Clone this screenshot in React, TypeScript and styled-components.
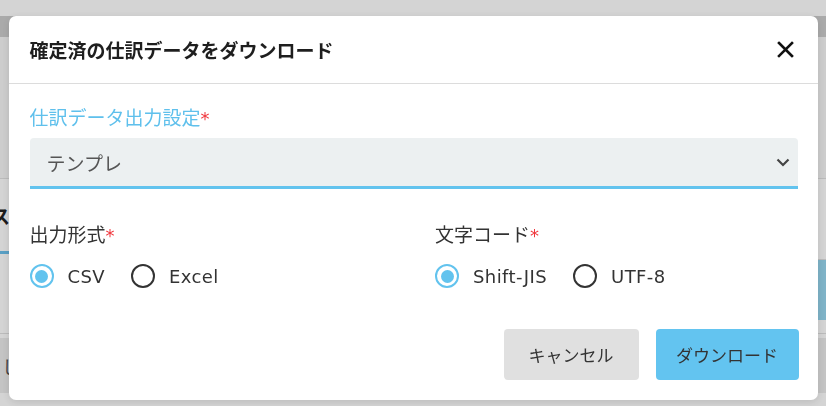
import React, { useState } from 'react';
import styled, { createGlobalStyle } from 'styled-components';

const GlobalStyle = createGlobalStyle`
  html, body {
    margin: 0;
    padding: 0;
    width: 826px;
    height: 406px;
    overflow: hidden;
    font-family: "DejaVu Sans", "Noto Sans CJK JP", sans-serif;
  }
`;

// ---- page behind the dialog ----
const Page = styled.div`
  width: 826px;
  height: 406px;
  background: #ffffff;
  display: flex;
  flex-direction: column;
`;

const TopSpace = styled.div`
  height: 16px;
  background: #ffffff;
`;

const AppBar = styled.div`
  height: 21px;
  background: #cdcdcd;
`;

const Summary = styled.div`
  height: 141px;
  background: #f7f7f7;
  border-bottom: 1px solid #e1e1e1;
`;

const TabRow = styled.div`
  height: 154px;
  display: flex;
  justify-content: space-between;
  border-bottom: 1px solid #e1e1e1;
`;

const Tab = styled.div`
  width: 60px;
  height: 72px;
  display: flex;
  align-items: center;
  justify-content: flex-end;
  font-family: "Noto Sans CJK JP", sans-serif;
  font-weight: 700;
  font-size: 19px;
  color: #222;
  border-bottom: 3px solid #6cc0ec;
  margin-left: -50px;
`;

const SideTools = styled.div`
  width: 40px;
  display: flex;
  flex-direction: column;
`;

const SideButton = styled.div`
  margin-top: 80px;
  height: 60px;
  background: #99d8f1;
  border-top: 1px solid #e1e1e1;
`;

const ListRow = styled.div`
  height: 55px;
  margin-top: 4px;
  background: #ececec;
  display: flex;
  align-items: center;
  font-family: "Noto Sans CJK JP", sans-serif;
  font-size: 18px;
  color: #555;
  padding-left: 2px;
`;

// ---- dialog ----
const Overlay = styled.div`
  position: fixed;
  inset: 0;
  background: rgba(0, 0, 0, 0.17);
  display: flex;
  justify-content: center;
  align-items: flex-start;
  padding-top: 16px;
`;

const Dialog = styled.div`
  width: 809px;
  background: #ffffff;
  border-radius: 7px;
  box-shadow: 0 2px 8px rgba(0, 0, 0, 0.12);
  display: flex;
  flex-direction: column;
`;

const Header = styled.div`
  height: 67px;
  padding: 0 23px 0 21px;
  display: flex;
  align-items: center;
  justify-content: space-between;
  border-bottom: 1px solid #dcdcdc;
`;

const Title = styled.h2`
  margin: 0;
  font-family: "Noto Sans CJK JP", sans-serif;
  font-size: 19px;
  font-weight: 700;
  color: #1e1e1e;
`;

const CloseButton = styled.button`
  width: 18px;
  height: 18px;
  padding: 0;
  border: none;
  background: transparent;
  display: flex;
  align-items: center;
  justify-content: center;
  cursor: pointer;
`;

const Body = styled.div`
  padding: 21px 19px 20px 21px;
  display: flex;
  flex-direction: column;
`;

const Label = styled.div<{ $active?: boolean }>`
  height: 24px;
  line-height: 24px;
  font-family: "Noto Sans CJK JP", sans-serif;
  font-size: 19px;
  color: ${p => (p.$active ? '#5fc0ec' : '#333')};
`;

const Required = styled.span`
  color: #f0363c;
  font-family: "DejaVu Sans", sans-serif;
  font-size: 18px;
`;

const SelectBox = styled.div`
  margin-top: 9px;
  margin-right: 1px;
  height: 48px;
  background: #ecf0f1;
  border-radius: 4px 4px 0 0;
  border-bottom: 3px solid #62c3ee;
  display: flex;
  align-items: center;
  justify-content: space-between;
  padding: 0 8px 0 17px;
`;

const SelectValue = styled.span`
  font-family: "Noto Sans CJK JP", sans-serif;
  font-size: 19px;
  color: #555;
`;

const Columns = styled.div`
  margin-top: 33px;
  display: grid;
  grid-template-columns: 1fr 1fr;
  column-gap: 42px;
`;

const Field = styled.div`
  display: flex;
  flex-direction: column;
`;

const RadioGroup = styled.div`
  margin-top: 15px;
  height: 30px;
  display: flex;
  align-items: center;
  gap: 26px;
`;

const RadioOption = styled.label`
  display: flex;
  align-items: center;
  gap: 14px;
  cursor: pointer;
`;

const RadioCircle = styled.span<{ $checked: boolean }>`
  width: 24px;
  height: 24px;
  box-sizing: border-box;
  border-radius: 50%;
  border: 2px solid ${p => (p.$checked ? '#62c3ee' : '#333')};
  display: flex;
  align-items: center;
  justify-content: center;
  &::after {
    content: '';
    width: 13px;
    height: 13px;
    border-radius: 50%;
    background: ${p => (p.$checked ? '#62c3ee' : 'transparent')};
  }
`;

const RadioText = styled.span`
  font-family: "DejaVu Sans", "Noto Sans CJK JP", sans-serif;
  font-size: 18px;
  letter-spacing: 0.4px;
  color: #333;
`;

const Footer = styled.div`
  margin-top: 38px;
  display: flex;
  justify-content: flex-end;
  gap: 17px;
`;

const Button = styled.button<{ $primary?: boolean }>`
  height: 51px;
  width: ${p => (p.$primary ? '143px' : '135px')};
  border: none;
  border-radius: 4px;
  background: ${p => (p.$primary ? '#63c4f0' : '#e0e0e0')};
  font-family: "Noto Sans CJK JP", sans-serif;
  font-size: 17px;
  color: #333;
  cursor: pointer;
`;

interface RadioProps {
  options: string[];
  value: string;
  onChange: (v: string) => void;
}

const Radios: React.FC<RadioProps> = ({ options, value, onChange }) => (
  <RadioGroup>
    {options.map(opt => (
      <RadioOption key={opt} onClick={() => onChange(opt)}>
        <RadioCircle $checked={value === opt} />
        <RadioText>{opt}</RadioText>
      </RadioOption>
    ))}
  </RadioGroup>
);

export default function App() {
  const [format, setFormat] = useState('CSV');
  const [encoding, setEncoding] = useState('Shift-JIS');

  return (
    <>
      <GlobalStyle />
      <Page>
        <TopSpace />
        <AppBar />
        <Summary />
        <TabRow>
          <Tab>ス</Tab>
          <SideTools>
            <SideButton />
          </SideTools>
        </TabRow>
        <ListRow>し</ListRow>
      </Page>
      <Overlay>
        <Dialog>
          <Header>
            <Title>確定済の仕訳データをダウンロード</Title>
            <CloseButton aria-label="close">
              <svg width="17" height="17" viewBox="0 0 17 17">
                <path d="M2 2 L15 15 M15 2 L2 15" stroke="#111" strokeWidth="2.6" strokeLinecap="square" />
              </svg>
            </CloseButton>
          </Header>
          <Body>
            <Label $active>
              仕訳データ出力設定<Required>*</Required>
            </Label>
            <SelectBox>
              <SelectValue>テンプレ</SelectValue>
              <svg width="14" height="9" viewBox="0 0 14 9">
                <path d="M1.5 1.5 L7 7 L12.5 1.5" fill="none" stroke="#444" strokeWidth="2.2" />
              </svg>
            </SelectBox>
            <Columns>
              <Field>
                <Label>
                  出力形式<Required>*</Required>
                </Label>
                <Radios options={['CSV', 'Excel']} value={format} onChange={setFormat} />
              </Field>
              <Field>
                <Label>
                  文字コード<Required>*</Required>
                </Label>
                <Radios options={['Shift-JIS', 'UTF-8']} value={encoding} onChange={setEncoding} />
              </Field>
            </Columns>
            <Footer>
              <Button>キャンセル</Button>
              <Button $primary>ダウンロード</Button>
            </Footer>
          </Body>
        </Dialog>
      </Overlay>
    </>
  );
}
